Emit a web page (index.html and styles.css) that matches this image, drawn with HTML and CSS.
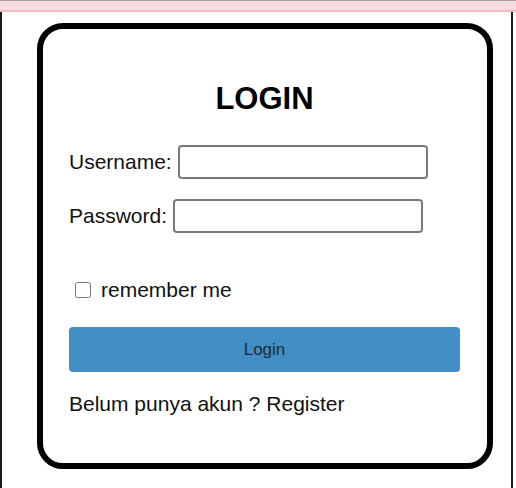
FILE: index.html
```html
<!DOCTYPE html>
<html>
<head>
<meta charset="utf-8">
<link rel="stylesheet" href="styles.css">
</head>
<body>
<div class="topbar"></div>
<div class="frame">
  <form class="card">
    <h2 class="title">LOGIN</h2>
    <div class="row">
      <label class="label" for="u">Username:</label>
      <input class="field" id="u" type="text">
    </div>
    <div class="row row-pass">
      <label class="label" for="p">Password:</label>
      <input class="field" id="p" type="password">
    </div>
    <div class="remember">
      <input class="check" id="r" type="checkbox">
      <label for="r">remember me</label>
    </div>
    <button class="btn" type="button">Login</button>
    <p class="register">Belum punya akun ? Register</p>
  </form>
</div>
</body>
</html>
```
FILE: styles.css
```css
html, body {
  margin: 0;
  padding: 0;
  background: #fff;
  height: 100%;
}
body {
  font-family: "Liberation Sans", Arial, sans-serif;
  color: #000;
  display: flex;
  flex-direction: column;
}
.topbar {
  height: 12px;
  box-sizing: border-box;
  border-top: 1px solid #a9a2a4;
  border-bottom: 2px solid #e9bcc4;
  background: #fadbe0;
  flex: none;
}
.frame {
  flex: 1;
  width: 513px;
  box-sizing: border-box;
  border-left: 2px solid #1a1a1a;
  border-right: 2px solid #1a1a1a;
  padding: 11px 0 0 35px;
}
.card {
  width: 456px;
  height: 446px;
  box-sizing: border-box;
  border: 6px solid #000;
  border-radius: 26px;
  padding: 53px 27px 0 26px;
  display: flex;
  flex-direction: column;
}
.title {
  margin: 0 0 29px;
  font-size: 31px;
  line-height: 34px;
  font-weight: bold;
  text-align: center;
}
.row {
  display: flex;
  align-items: center;
  gap: 6px;
  height: 34px;
  font-size: 21px;
  color: #111;
}
.row-pass {
  margin-top: 20px;
}
.label {
  line-height: 24px;
}
.field {
  width: 250px;
  height: 34px;
  box-sizing: border-box;
  border: 2px solid #7a7a7a;
  border-radius: 4px;
  margin: 0;
  padding: 2px 4px;
  background: #fff;
  font-size: 16px;
}
.remember {
  margin-top: 45px;
  display: flex;
  align-items: center;
  height: 24px;
  font-size: 21px;
  line-height: 24px;
  color: #111;
}
.check {
  width: 16px;
  height: 16px;
  margin: 0 10px 0 6px;
}
.btn {
  margin-top: 25px;
  height: 45px;
  width: 100%;
  border: none;
  border-radius: 4px;
  background: #418fc5;
  color: #1e2a36;
  font-family: "Liberation Sans", Arial, sans-serif;
  font-size: 17px;
  padding: 0;
}
.register {
  margin: 20px 0 0;
  font-size: 21px;
  line-height: 24px;
  color: #111;
}
```
